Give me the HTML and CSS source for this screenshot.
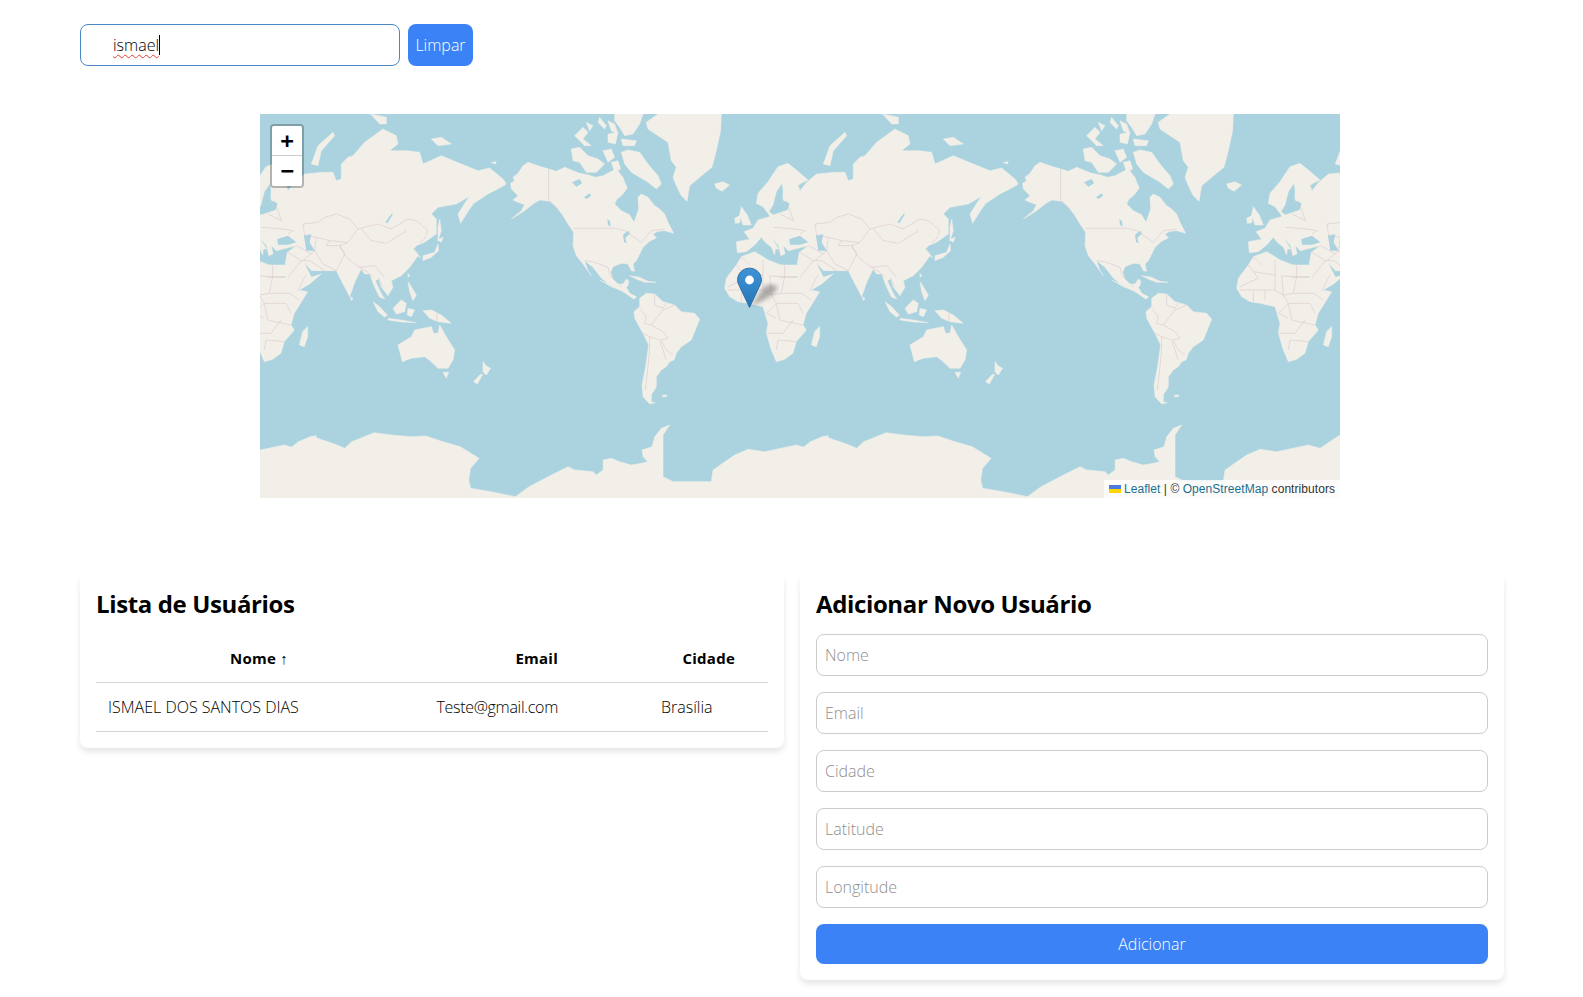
FILE: index.html
```html
<!DOCTYPE html>
<html lang="pt-BR">
<head>
  <meta charset="UTF-8" />
  <meta name="viewport" content="width=device-width, initial-scale=1.0"/>
  <title>Usuários</title>
  <link rel="stylesheet" href="styles.css">
</head>
<body>
  <div class="search-row">
    <div class="search-box"><span class="typed">ismael</span><span class="caret"></span></div>
    <button class="btn btn-clear">Limpar</button>
  </div>

  <div class="map">
    <svg class="tiles" viewBox="260 114 1080 384" preserveAspectRatio="none">
      <defs>
        <g id="world">
          <!-- america do norte, groenlandia, ilhas -->
          <g transform="translate(1020 114) scale(.3333)">
            <g class="land">
              <polygon points="8,208 20,200 15,190 30,178 45,155 60,145 90,155 122,165 145,172 170,160 195,170 215,178 240,182 262,190 285,185 305,175 325,165 345,190 350,205 358,222 345,240 325,258 320,270 340,290 365,302 378,325 385,305 392,285 390,250 400,240 420,250 440,275 455,285 470,300 480,325 497,358 470,350 450,352 435,360 445,372 425,382 405,400 395,420 385,440 375,450 380,472 370,470 360,450 340,448 315,458 308,475 315,495 330,510 345,510 355,495 362,500 360,515 345,525 358,540 385,550 378,555 355,540 335,520 300,510 278,490 255,460 230,440 240,470 250,485 225,450 205,425 195,395 197,355 180,330 165,305 150,285 125,262 95,258 75,270 50,290 10,315 40,290 50,272 30,265 15,258 30,245 10,225"/>
              <polygon points="340,115 360,108 395,115 420,150 450,185 460,210 445,225 420,205 395,190 370,175 350,150"/>
              <polygon points="190,105 215,100 240,125 270,135 290,150 265,175 235,175 215,145 195,140"/>
              <polygon points="285,110 310,105 320,130 300,145"/>
              <polygon points="310,145 330,140 338,165 320,175"/>
              <polygon points="200,65 225,40 240,55 225,75 250,95 230,95"/>
              <polygon points="235,25 255,35 245,50"/>
              <polygon points="275,10 295,35 290,45 270,25"/>
              <polygon points="300,60 330,55 322,90 300,85"/>
              <polygon points="340,75 385,80 380,95 345,95"/>
              <polygon points="320,0 405,0 395,30 375,60 350,65 335,40 320,20"/>
              <polygon points="300,20 320,30 330,60 310,50"/>
              <polygon points="415,25 450,0 640,0 638,50 625,110 612,160 575,190 545,215 537,262 520,245 505,215 495,190 505,160 490,140 480,85 450,65 420,45"/>
              <polygon points="365,485 395,490 420,502 445,505 410,505 385,495"/>
            </g>
            <g class="water">
              <polygon points="345,362 360,350 366,358 352,372 356,388 348,384"/>
              <polygon points="298,315 306,322 308,338 300,332"/>
              <polygon points="192,205 215,195 222,208 205,218"/>
              <polygon points="228,250 245,238 250,245 235,255"/>
            </g>
            <path class="border" d="M122 165V258L150 285M197 343H320L350 350 400 385 430 350 470 345M230 440L260 445 300 460 305 480 315 495M335 510L345 525 360 535"/>
          </g>
          <!-- america do sul -->
          <g transform="translate(1060 280) scale(.3333)">
            <g class="land">
              <polygon points="258,95 275,80 275,55 295,40 320,42 345,65 380,75 400,95 440,100 455,118 440,155 430,180 400,200 385,220 378,240 365,245 355,260 340,270 325,290 325,320 310,345 310,365 322,368 305,372 285,350 282,315 292,265 302,195 285,160 260,115"/>
              <polygon points="155,0 185,15 210,20 235,22 245,40 265,50 255,55 235,40 215,30 190,20"/>
              <polygon points="343,345 357,345 355,350 344,350"/>
            </g>
            <path class="border" d="M275 85L295 110 290 130 310 135 345 155 360 175 340 180 355 210 375 225M305 170V200L300 260 292 330M320 45V75L345 85 355 70M310 135L345 90 380 75M285 160L305 170 335 180M335 180L355 240"/>
          </g>
          <!-- africa, reino unido, islandia -->
          <g transform="translate(1220 150) scale(.3333)">
            <g class="land">
              <polygon points="50,415 55,385 85,345 100,320 140,305 165,320 180,330 220,345 270,345 285,380 305,420 335,425 320,450 295,490 285,525 295,540 265,575 255,610 230,628 205,635 190,600 175,550 180,520 165,470 120,460 90,455 65,440"/>
              <polygon points="320,545 335,530 335,560 325,590 310,585"/>
              <polygon points="100,170 118,195 130,225 105,225 95,195"/>
              <polygon points="80,205 98,195 95,218 82,220"/>
              <polygon points="20,102 45,95 65,105 42,124 25,115"/>
            </g>
            <path class="border" d="M85 345L100 365 115 385 60 410M100 365L165 375V330M165 375V420H135V450M230 345V380H270M185 378L230 380 220 430 190 435 185 378M220 430H280L310 450M165 420L190 435 205 460H270L285 490M175 490L205 460M175 550H225L255 510M205 460L215 510 260 520 285 525M205 600L210 570 265 575M60 420H135M100 425V455M135 240L150 265M150 215L175 265M175 230L240 225 290 235M240 180L265 220M215 265L260 260M180 130L190 170M215 60L245 95 240 150M195 205L200 260M150 265L185 250 215 265M230 225L225 265M290 235L260 260M265 220L300 200M100 320L125 345M175 490L205 505M140 550L175 520"/>
          </g>
          <!-- eurasia -->
          <g transform="translate(1292 114) scale(.3333)">
            <g class="land">
              <polygon points="-128,416 -131,383 -91,376 -108,353 -81,343 -66,318 -31,308 -38,288 -21,303 24,288 29,268 9,258 9,223 6,208 -11,233 -21,273 -36,298 -51,278 -71,268 -66,238 -36,203 -6,158 24,148 49,168 84,198 54,213 60,230 80,205 110,180 165,175 195,175 205,200 220,195 220,150 240,130 255,125 290,85 345,45 385,65 390,90 365,110 420,110 455,115 465,150 520,125 575,148 630,170 665,162 705,195 715,210 695,222 660,240 615,270 600,250 565,270 510,280 490,300 505,315 505,360 470,385 445,395 425,420 415,405 430,400 442,410 458,432 450,425 425,460 400,485 370,500 375,520 360,545 340,520 332,495 322,500 338,535 350,555 335,550 318,515 305,480 290,480 280,465 262,500 245,548 225,510 205,470 165,470 130,470 108,445 130,490 160,480 125,510 90,530 70,505 50,460 58,415 85,395 25,410 10,395 15,420 2,425 -4,395 -26,370 -10,395 -4,406 -14,405 -16,423 -26,400 -46,383 -56,370 -76,393 -101,413"/>
              <polygon points="605,245 570,300 578,328 605,285 615,272"/>
              <polygon points="130,150 150,95 195,55 200,65 160,110 150,155"/>
              <polygon points="308,0 355,10 355,30 335,30"/>
              <polygon points="490,75 520,70 550,90 510,95"/>
              <polygon points="670,145 685,143 682,150"/>
              <polygon points="515,315 520,350 510,380 510,340"/>
              <polygon points="465,425 500,415 510,390 512,410 490,430 465,440"/>
              <polygon points="508,378 525,370 520,385"/>
            </g>
            <g class="water">
              <polygon points="28,375 60,365 85,385 60,392 30,392"/>
              <polygon points="108,365 130,360 125,385 140,410 115,410"/>
              <polygon points="352,325 372,298 374,302 358,328"/>
            </g>
            <path class="border" d="M105 330L150 325 170 310 205 300 245 315 270 345 330 330 370 345 420 315 445 320 480 350 470 375 455 385M280 345L310 380 355 388 400 360 415 350M270 345L240 385 215 395 235 430 275 460 320 455 350 490M105 330L110 365 145 370 185 380 235 385M145 370L140 410 165 450 205 470M175 395H215L230 420 205 470M275 460L300 475 315 490M60 490L100 440H125L170 470M85 395L130 420M0 490H50M-20 340L40 345 75 350 60 360M0 300L40 320 20 260M185 380L175 395M140 410L105 440M60 415L100 440M90 530L115 480M330 490L345 520"/>
          </g>
          <!-- sudeste asiatico e oceania -->
          <g transform="translate(1292 240) scale(.3333)">
            <g class="land">
              <polygon points="247,170 255,175 250,182"/>
              <polygon points="315,185 335,200 358,225 350,232 330,215"/>
              <polygon points="360,235 400,240 445,248 400,246 360,240"/>
              <polygon points="375,205 400,180 415,190 410,215 385,222"/>
              <polygon points="420,205 440,210 430,230 418,225"/>
              <polygon points="465,212 490,210 520,225 550,250 510,245 485,235"/>
              <polygon points="420,125 430,140 445,165 435,182 425,155"/>
              <polygon points="420,100 425,108 420,112"/>
              <polygon points="390,315 430,290 440,270 465,265 490,260 497,280 510,280 515,255 535,290 560,330 555,360 540,385 510,385 490,365 470,350 430,355 403,365 398,345"/>
              <polygon points="525,397 542,397 535,415"/>
              <polygon points="645,365 655,378 668,385 655,405 645,395"/>
              <polygon points="645,402 628,432 617,425 635,405"/>
            </g>
            <path class="border" d="M507 220V247"/>
          </g>
          <!-- antartida -->
          <g transform="translate(800 110) scale(.3444 .3333)">
            <polygon class="land" points="0,1020 30,995 70,978 100,990 130,1000 165,1015 185,995 250,968 300,975 360,980 400,978 450,995 500,1010 555,1045 530,1075 525,1110 530,1135 590,1145 660,1160 700,1130 755,1100 813,1070 832,1080 886,1085 895,1095 915,1080 915,1050 939,1045 963,1055 997,1065 1026,1060 1045,1055 1031,1040 1028,1020 1057,1010 1065,980 1084,955 1108,945 1089,975 1089,1055 1089,1100 1118,1115 1229,1115 1234,1080 1297,1035 1336,1018 1384,1025 1476,1005 1510,1015 1568,975 1568,1300 0,1300"/>
          </g>
        </g>
      </defs>
      <rect class="sea" x="260" y="114" width="1080" height="384"/>
      <use href="#world"/>
      <use href="#world" x="-512"/>
      <use href="#world" x="-1024"/>
    </svg>

    <svg class="marker-shadow" width="41" height="41" viewBox="0 0 41 41">
      <defs><filter id="soft"><feGaussianBlur stdDeviation="2.2"/></filter></defs>
      <path d="M2 39L15 20C20 16 29 17 28 22 26 28 10 36 2 39Z" fill="#666" opacity=".5" filter="url(#soft)"/>
    </svg>
    <svg class="marker" width="25" height="41" viewBox="0 0 25 41">
      <defs>
        <linearGradient id="pin" x1="0" y1="0" x2="0" y2="1">
          <stop offset="0" stop-color="#3f93d6"/>
          <stop offset="1" stop-color="#2576b8"/>
        </linearGradient>
      </defs>
      <path d="M12.5 1.2C5.9 1.2 .6 6.3 .6 12.8 .6 15.2 1.4 17 2.5 19.2L12.5 40.4 22.5 19.2C23.6 17 24.4 15.2 24.4 12.8 24.4 6.3 19.1 1.2 12.5 1.2Z" fill="url(#pin)" stroke="#2f6f9f"/>
      <circle cx="12.5" cy="13" r="4.4" fill="#fff"/>
    </svg>

    <div class="zoom-ctl">
      <a class="zoom-btn">+</a>
      <a class="zoom-btn">−</a>
    </div>

    <div class="attribution">
      <svg class="flag" width="12" height="8" viewBox="0 0 12 8"><rect width="12" height="4" fill="#4C7BE1"/><rect y="4" width="12" height="4" fill="#FFD500"/></svg>
      <a>Leaflet</a> | © <a>OpenStreetMap</a> contributors
    </div>
  </div>

  <div class="panels">
    <section class="card list-card">
      <h2>Lista de Usuários</h2>
      <table class="users">
        <thead>
          <tr>
            <th class="col-name">Nome ↑</th>
            <th class="col-email">Email</th>
            <th class="col-city">Cidade</th>
          </tr>
        </thead>
        <tbody>
          <tr>
            <td class="col-name">ISMAEL DOS SANTOS DIAS</td>
            <td class="col-email">Teste@gmail.com</td>
            <td class="col-city">Brasília</td>
          </tr>
        </tbody>
      </table>
    </section>

    <section class="card">
      <h2>Adicionar Novo Usuário</h2>
      <form class="user-form">
        <input type="text" placeholder="Nome">
        <input type="text" placeholder="Email">
        <input type="text" placeholder="Cidade">
        <input type="text" placeholder="Latitude">
        <input type="text" placeholder="Longitude">
        <button type="button" class="btn btn-add">Adicionar</button>
      </form>
    </section>
  </div>
</body>
</html>
```

FILE: styles.css
```css
* {
  box-sizing: border-box;
}

body {
  margin: 0;
  padding: 24px 79px 17px 80px;
  font-family: 'Open Sans', sans-serif;
  font-weight: 300;
  font-size: 16px;
  color: #000;
  background-color: #fff;
}

.search-row {
  display: flex;
  gap: 8px;
  height: 42px;
}

.search-box {
  width: 320px;
  display: flex;
  align-items: center;
  padding-left: 32px;
  border: 1px solid #4a86c8;
  border-radius: 8px;
}

.typed {
  text-decoration: underline wavy #e0403a 1px;
  text-underline-offset: 3px;
}

.caret {
  width: 1px;
  height: 20px;
  background-color: #000;
}

.btn {
  border: none;
  border-radius: 8px;
  background-color: #3b82f6;
  color: #fff;
  font-family: inherit;
  font-weight: 300;
  font-size: 16px;
}

.btn-clear {
  width: 65px;
  padding: 0;
}

.map {
  position: relative;
  width: 1080px;
  height: 384px;
  margin: 48px 0 76px 180px;
  overflow: hidden;
  background-color: #aad3df;
}

.tiles {
  display: block;
  width: 100%;
  height: 100%;
  filter: blur(0.35px);
}

.sea { fill: #aad3df; }
.water { fill: #aad3df; }

.land {
  fill: #f2efe9;
  stroke: #f2efe9;
  stroke-width: 1.5;
  stroke-linejoin: round;
}

.border {
  fill: none;
  stroke: #d5bfc9;
  stroke-width: 1.5;
}

.marker {
  position: absolute;
  left: 477px;
  top: 153px;
}

.marker-shadow {
  position: absolute;
  left: 489px;
  top: 153px;
}

.zoom-ctl {
  position: absolute;
  left: 10px;
  top: 10px;
  border: 2px solid rgba(0,0,0,0.25);
  border-radius: 4px;
  background-clip: padding-box;
}

.zoom-btn {
  display: block;
  width: 30px;
  height: 30px;
  line-height: 30px;
  text-align: center;
  background-color: #fff;
  font: bold 22px/30px 'DejaVu Sans Mono', monospace;
  color: #000;
}

.zoom-btn:first-child {
  border-bottom: 1px solid #ccc;
  border-radius: 2px 2px 0 0;
}

.zoom-btn:last-child {
  border-radius: 0 0 2px 2px;
}

.attribution {
  position: absolute;
  right: 0;
  bottom: 0;
  padding: 0 5px;
  background-color: rgba(255,255,255,0.8);
  font-family: 'Liberation Sans', sans-serif;
  font-weight: 400;
  font-size: 12px;
  line-height: 18px;
  letter-spacing: 0.06px;
  color: #333;
}

.attribution a {
  color: #17708f;
}

.panels {
  display: grid;
  grid-template-columns: 704px 704px;
  gap: 16px;
  align-items: start;
}

.card {
  padding: 16px;
  background-color: #fff;
  border-radius: 8px;
  box-shadow: 0 4px 6px rgba(0,0,0,0.1);
}

h2 {
  margin: 0 0 17px;
  font-size: 24px;
  line-height: 27px;
  font-weight: 700;
  letter-spacing: -0.37px;
}

.users {
  width: 100%;
  border-collapse: collapse;
  table-layout: fixed;
}

.users th {
  height: 48px;
  font-weight: 700;
  font-size: 15px;
  letter-spacing: 0.25px;
  border-bottom: 1px solid #d1d5db;
}

.users td {
  height: 49px;
  border-bottom: 1px solid #d1d5db;
}

.users .col-name {
  width: 321px;
}

td.col-name {
  padding-left: 12px;
  text-align: left;
}

th.col-name {
  padding-left: 6px;
  text-align: center;
}

.users .col-email {
  width: 153px;
  padding-right: 12px;
  text-align: right;
}

td.col-email {
  letter-spacing: -0.3px;
}

th.col-city {
  padding-right: 33px;
  text-align: right;
}

td.col-city {
  padding-left: 91px;
  text-align: left;
}

.user-form {
  display: flex;
  flex-direction: column;
  gap: 16px;
}

.user-form input {
  height: 42px;
  padding: 8px;
  border: 1px solid #ccc;
  border-radius: 8px;
  font-family: inherit;
  font-weight: 300;
  font-size: 16px;
}

.user-form input::placeholder {
  color: #8f8f8f;
}

.btn-add {
  height: 40px;
}
```
